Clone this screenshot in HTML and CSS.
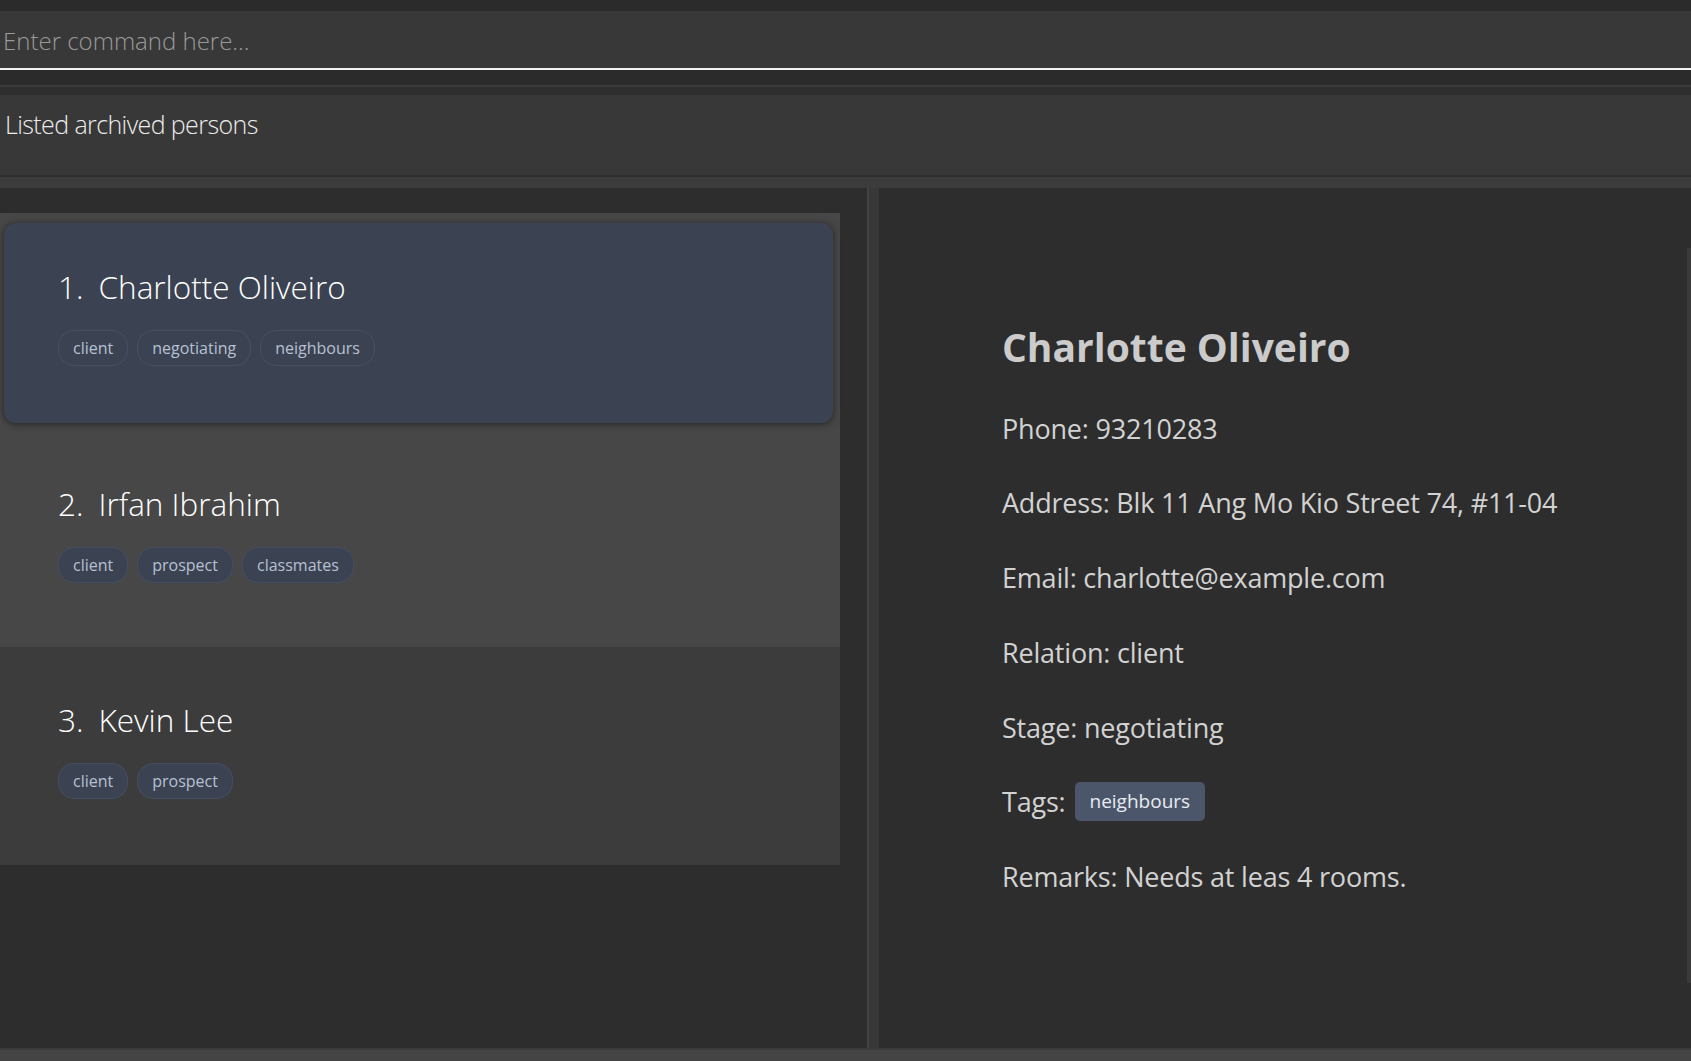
FILE: index.html
```html
<!DOCTYPE html>
<html lang="en">
<head>
<meta charset="utf-8">
<title>Address Book</title>
<link rel="stylesheet" href="styles.css">
</head>
<body>
<div class="app">
  <div class="top-strip"></div>
  <div class="command-box"><span class="placeholder">Enter command here...</span></div>
  <div class="gap-a"></div>
  <div class="sep-line"></div>
  <div class="gap-b"></div>
  <div class="result-display">Listed archived persons</div>
  <div class="result-foot"></div>
  <div class="main">
    <div class="list-panel">
      <ul class="person-list">
        <li class="row row-selected">
          <div class="card">
            <div class="name"><span class="index">1.</span>Charlotte Oliveiro</div>
            <div class="tags">
              <span class="tag">client</span>
              <span class="tag">negotiating</span>
              <span class="tag">neighbours</span>
            </div>
          </div>
        </li>
        <li class="row row-even">
          <div class="name"><span class="index">2.</span>Irfan Ibrahim</div>
          <div class="tags">
            <span class="tag">client</span>
            <span class="tag">prospect</span>
            <span class="tag">classmates</span>
          </div>
        </li>
        <li class="row row-odd">
          <div class="name"><span class="index">3.</span>Kevin Lee</div>
          <div class="tags">
            <span class="tag">client</span>
            <span class="tag">prospect</span>
          </div>
        </li>
      </ul>
    </div>
    <div class="divider"></div>
    <div class="detail">
      <h1 class="detail-name">Charlotte Oliveiro</h1>
      <div class="detail-fields">
        <div class="field">Phone: 93210283</div>
        <div class="field">Address: Blk 11 Ang Mo Kio Street 74, #11-04</div>
        <div class="field">Email: charlotte@example.com</div>
        <div class="field">Relation: client</div>
        <div class="field">Stage: negotiating</div>
        <div class="field field-tags">Tags: <span class="detail-tag">neighbours</span></div>
        <div class="field">Remarks: Needs at leas 4 rooms.</div>
      </div>
      <div class="scrollbar"></div>
    </div>
  </div>
  <div class="status-bar"></div>
</div>
</body>
</html>
```
FILE: styles.css
```css
* { box-sizing: border-box; }
html, body {
  margin: 0;
  padding: 0;
  height: 100%;
  overflow: hidden;
}
body {
  background: #2d2d2d;
  font-family: "Open Sans", "Noto Sans", sans-serif;
  color: #d0d0d0;
}
.app {
  display: flex;
  flex-direction: column;
  height: 1061px;
}
.top-strip {
  height: 11px;
  background: #2b2b2b;
}
.command-box {
  height: 59px;
  background: #383838;
  border-bottom: 2px solid #f2f2f2;
  padding-left: 3px;
  line-height: 59px;
}
.placeholder {
  font-size: 24px;
  font-weight: 300;
  color: #9a9a9a;
}
.gap-a {
  height: 15px;
  background: #2b2b2b;
}
.sep-line {
  height: 2px;
  background: #3a3a3a;
}
.gap-b {
  height: 8px;
  background: #2e2e2e;
}
.result-display {
  height: 80px;
  background: #383838;
  padding: 11px 0 0 5px;
  font-size: 25px;
  line-height: 36px;
  font-weight: 300;
  letter-spacing: -0.6px;
  color: #ececec;
}
.result-foot {
  height: 13px;
  background: #3c3c3c;
  border-top: 2px solid #2e2e2e;
}
.main {
  flex: 1;
  display: flex;
  min-height: 0;
  background: #2d2d2d;
}
.list-panel {
  width: 867px;
  padding-top: 25px;
}
.person-list {
  list-style: none;
  margin: 0;
  padding: 0;
  width: 840px;
}
.row {
  display: flex;
  flex-direction: column;
}
.row-selected {
  height: 210px;
  background: #474747;
  padding: 10px 7px 0 4px;
}
.card {
  height: 200px;
  background: #3b4252;
  border-radius: 12px;
  box-shadow: 0 1px 7px rgba(0, 0, 0, 0.5);
  padding: 49px 0 0 54px;
}
.row-even {
  height: 224px;
  background: #474747;
  padding: 66px 0 0 58px;
}
.row-odd {
  height: 218px;
  background: #3c3c3c;
  padding: 58px 0 0 58px;
}
.name {
  font-size: 31.5px;
  line-height: 30px;
  font-weight: 300;
  color: #ffffff;
  white-space: nowrap;
}
.index {
  margin-right: 15px;
}
.tags {
  display: flex;
  gap: 9px;
  margin-top: 28px;
}
.tag {
  height: 36px;
  padding: 0 14px;
  border: 1px solid #475063;
  border-radius: 16px;
  font-size: 16px;
  line-height: 34px;
  color: #b6c1d3;
}
.row-even .tag,
.row-odd .tag {
  background: #3b4252;
  border-color: #454e61;
}
.divider {
  width: 12px;
  background: #383838;
  border-left: 2px solid #444444;
}
.detail {
  flex: 1;
  position: relative;
  padding: 131px 0 0 123px;
  background: #2d2d2d;
}
.detail-name {
  margin: 0;
  font-size: 39px;
  line-height: 56px;
  font-weight: 700;
  color: #cbcbcb;
}
.detail-fields {
  display: flex;
  flex-direction: column;
  gap: 34.75px;
  margin-top: 33px;
}
.field {
  height: 40px;
  display: flex;
  align-items: center;
  font-size: 27px;
  letter-spacing: -0.2px;
  color: #d2d2d2;
  white-space: nowrap;
}
.detail-tag {
  display: inline-block;
  margin-left: 9px;
  height: 39px;
  padding: 0 15px;
  background: #4c566a;
  border-radius: 5px;
  font-size: 19px;
  line-height: 39px;
  letter-spacing: 0;
  color: #e8ecf2;
}
.scrollbar {
  position: absolute;
  right: 0;
  top: 60px;
  width: 4px;
  height: 735px;
  background: #3a3a3a;
}
.status-bar {
  height: 13px;
  background: #444444;
  border-top: 2px solid #3a3a3a;
}
```
